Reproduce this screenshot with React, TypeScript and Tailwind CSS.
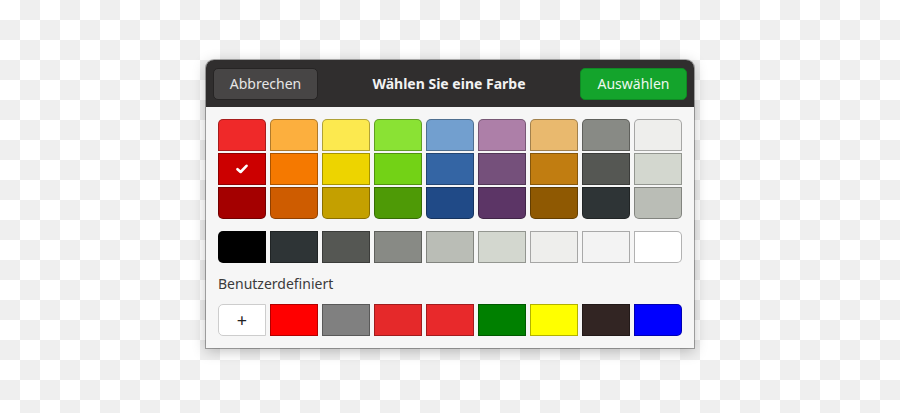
import React from "react";

const grid: string[][] = [
  ["#ef2929", "#fcaf3e", "#fce94f", "#8ae234", "#729fcf", "#ad7fa8", "#e9b96e", "#888a85", "#eeeeec"],
  ["#cc0000", "#f57900", "#edd400", "#73d216", "#3465a4", "#75507b", "#c17d11", "#555753", "#d3d7cf"],
  ["#a40000", "#ce5c00", "#c4a000", "#4e9a06", "#204a87", "#5c3566", "#8f5902", "#2e3436", "#babdb6"],
];

const grays = ["#000000", "#2e3436", "#555753", "#888a85", "#babdb6", "#d3d7cf", "#eeeeec", "#f3f3f3", "#ffffff"];

const custom = ["#ff0000", "#808080", "#e5292a", "#e8292b", "#008000", "#ffff00", "#322523", "#0000ff"];

function Swatch({ color, className = "", selected = false }: { color: string; className?: string; selected?: boolean }) {
  return (
    <div
      className={`flex h-8 w-12 items-center justify-center border border-black/30 ${className}`}
      style={{ backgroundColor: color }}
    >
      {selected && (
        <svg width="12" height="10" viewBox="0 0 12 10" fill="none">
          <path d="M1.5 5.2 L4.6 8 L10.5 1.8" stroke="#fff" strokeWidth="2.6" strokeLinecap="round" strokeLinejoin="round" />
        </svg>
      )}
    </div>
  );
}

export default function App() {
  return (
    <div
      className="flex h-[413px] w-[900px] justify-center bg-[conic-gradient(#efefef_25%,#fff_0_50%,#efefef_0_75%,#fff_0)] bg-[length:40px_40px] pt-[60px]"
      style={{ fontFamily: '"Noto Sans", "Open Sans", sans-serif' }}
    >
      <div className="h-[288px] w-[488px] overflow-hidden rounded-t-[8px] bg-[#f6f6f6] shadow-[0_0_0_1px_rgba(0,0,0,0.3),0_3px_14px_rgba(0,0,0,0.25)]">
        <div className="flex h-[47px] items-center justify-between bg-[#302e2e] px-[7px]">
          <button className="h-8 w-[105px] rounded-[5px] border border-[#262424] bg-[#474545] text-[14px] text-[#e6e6e6]">
            Abbrechen
          </button>
          <div className="text-[14px] font-bold text-[#f2f2f2]">Wählen Sie eine Farbe</div>
          <button className="h-8 w-[107px] rounded-[5px] border border-[#0f8a24] bg-[#14a42c] text-[14px] text-[#eef8ef]">
            Auswählen
          </button>
        </div>

        <div className="flex flex-col px-3 pt-3">
          <div className="flex gap-1">
            {grid[0].map((_, c) => (
              <div key={c} className="flex flex-col gap-[2px]">
                {grid.map((row, r) => (
                  <Swatch
                    key={r}
                    color={row[c]}
                    selected={r === 1 && c === 0}
                    className={r === 0 ? "rounded-t-[5px]" : r === 2 ? "rounded-b-[5px]" : ""}
                  />
                ))}
              </div>
            ))}
          </div>

          <div className="mt-3 flex gap-1">
            {grays.map((g, i) => (
              <Swatch key={g} color={g} className={i === 0 ? "rounded-l-[5px]" : i === grays.length - 1 ? "rounded-r-[5px]" : ""} />
            ))}
          </div>

          <div className="mt-[11px] h-[19px] text-[14px] leading-[19px] text-[#3b3b3b]">Benutzerdefiniert</div>

          <div className="mt-[11px] flex gap-1">
            <div className="flex h-8 w-12 items-center justify-center rounded-l-[5px] border border-[#cdcdcd] bg-white text-[18px] leading-none text-[#222]">
              +
            </div>
            {custom.map((c, i) => (
              <Swatch key={i} color={c} className={i === custom.length - 1 ? "rounded-r-[5px]" : ""} />
            ))}
          </div>
        </div>
      </div>
    </div>
  );
}
